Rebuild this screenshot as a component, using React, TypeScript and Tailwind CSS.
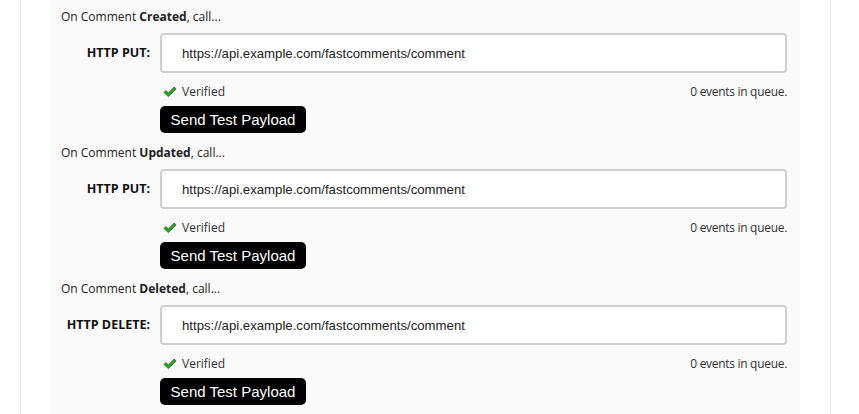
import React from "react";

const sections = [
  { event: "Created", method: "HTTP PUT:" },
  { event: "Updated", method: "HTTP PUT:" },
  { event: "Deleted", method: "HTTP DELETE:" },
];

function Check() {
  return (
    <svg width="14" height="12" viewBox="0 0 14 12" className="shrink-0">
      <path
        d="M1 6.5 L3 4.6 L5.4 7 L11.2 1 L13 2.9 L5.4 10.6 Z"
        fill="#22a82a"
        stroke="#146b18"
        strokeWidth="0.8"
        strokeLinejoin="round"
      />
    </svg>
  );
}

function Webhook({ event, method }: { event: string; method: string }) {
  return (
    <div className="flex flex-col pt-[9px] pb-[3px]">
      {/* header */}
      <div className="pl-[10px] h-[16px] leading-[16px] text-[12px] text-[#222]">
        On Comment <b className="font-bold">{event}</b>, call...
      </div>

      {/* url row */}
      <div className="mt-[8px] flex items-center">
        <div className="w-[99px] text-right text-[12.5px] font-bold text-[#111]">
          {method}
        </div>
        <input
          readOnly
          value="https://api.example.com/fastcomments/comment"
          className="ml-[10px] w-[627px] h-[40px] border-2 border-[#cfcfcf] rounded-[4px] bg-white pl-[20px] text-[13.2px] text-[#222] outline-none font-['Liberation_Sans',Arial,sans-serif]"
        />
      </div>

      {/* status */}
      <div className="mt-[11px] ml-[109px] w-[627px] h-[16px] flex items-center justify-between text-[12px] text-[#333]">
        <div className="flex items-center gap-[5px] pl-[3px]">
          <Check />
          <span>Verified</span>
        </div>
        <span className="tracking-[-0.3px]">0 events in queue.</span>
      </div>

      {/* button */}
      <div className="mt-[6px] ml-[109px]">
        <button className="w-[146px] h-[27px] bg-black text-white rounded-[5px] text-[15px] leading-[27px] font-['Liberation_Sans',Arial,sans-serif]">
          Send Test Payload
        </button>
      </div>
    </div>
  );
}

export default function App() {
  return (
    <div className="bg-white h-[414px] overflow-hidden font-['Open_Sans','Noto_Sans',sans-serif]">
      <div className="ml-[20px] w-[811px] h-full border-l border-r border-[#e6e6e6] px-[30px]">
        <div className="bg-[#fafafa] h-full">
          {sections.map((s) => (
            <Webhook key={s.event} event={s.event} method={s.method} />
          ))}
        </div>
      </div>
    </div>
  );
}
